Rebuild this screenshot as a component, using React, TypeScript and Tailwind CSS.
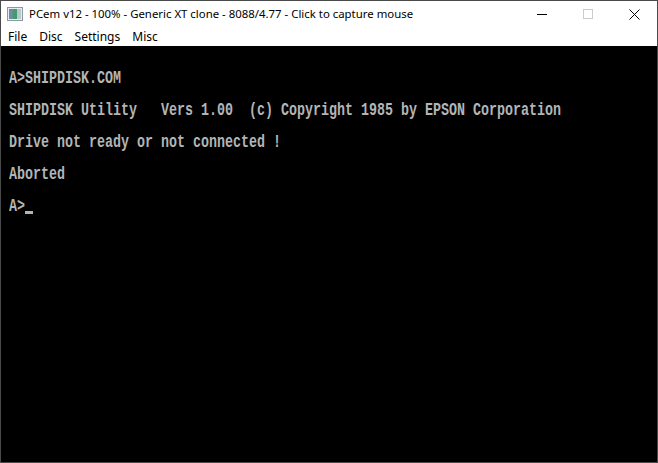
import React from "react";

const lines = [
  "A>SHIPDISK.COM",
  "SHIPDISK Utility   Vers 1.00  (c) Copyright 1985 by EPSON Corporation",
  "Drive not ready or not connected !",
  "Aborted",
];

export default function App() {
  const ui = { fontFamily: '"Noto Sans", "Open Sans", sans-serif' };
  const mono = { fontFamily: '"Liberation Mono", "DejaVu Sans Mono", monospace' };
  return (
    <div className="w-[658px] h-[463px] flex flex-col border border-[#4a4a4a] bg-white overflow-hidden">
      <div className="h-[29px] flex items-center pb-[3px] bg-white" style={ui}>
        <svg width="16" height="14" viewBox="0 0 16 14" className="ml-[6px] mr-[6px]">
          <rect x="0.5" y="0.5" width="15" height="13" fill="#e8eef0" stroke="#8a9aa0" />
          <rect x="2" y="2" width="4" height="10" fill="#6f8e9c" />
          <rect x="6" y="2" width="4" height="10" fill="#3d9e6a" />
          <rect x="10" y="2" width="4" height="10" fill="#b9c7cf" />
        </svg>
        <span className="text-[11.4px] text-black leading-none">PCem v12 - 100% - Generic XT clone - 8088/4.77 - Click to capture mouse</span>
        <div className="ml-auto flex h-full">
          <div className="w-[46px] flex items-center justify-center">
            <div className="w-[10px] h-px bg-black" />
          </div>
          <div className="w-[46px] flex items-center justify-center">
            <div className="w-[10px] h-[10px] border border-[#cccccc]" />
          </div>
          <div className="w-[46px] flex items-center justify-center">
            <svg width="11" height="11" viewBox="0 0 11 11">
              <path d="M0.5 0.5 L10.5 10.5 M10.5 0.5 L0.5 10.5" stroke="#000" strokeWidth="1" />
            </svg>
          </div>
        </div>
      </div>
      <div className="h-[16px] flex items-center gap-[12px] pl-[7px] pb-[2px] text-[12px] text-black bg-white" style={ui}>
        <span>File</span>
        <span>Disc</span>
        <span>Settings</span>
        <span>Misc</span>
      </div>
      <div className="flex-1 bg-black pt-[17px] pl-[8px] text-[#b4b4b4]" style={mono}>
        {lines.map((l, i) => (
          <div key={i} className="h-[32px] flex items-center">
            <span className="inline-block whitespace-pre text-[13.333px] font-bold leading-none scale-y-[1.4]">{l}</span>
          </div>
        ))}
        <div className="h-[32px] flex items-center">
          <span className="inline-block whitespace-pre text-[13.333px] font-bold leading-none scale-y-[1.4]">A&gt;</span>
          <div className="w-[8px] h-[3px] bg-[#b4b4b4] mt-[10px]" />
        </div>
      </div>
    </div>
  );
}
